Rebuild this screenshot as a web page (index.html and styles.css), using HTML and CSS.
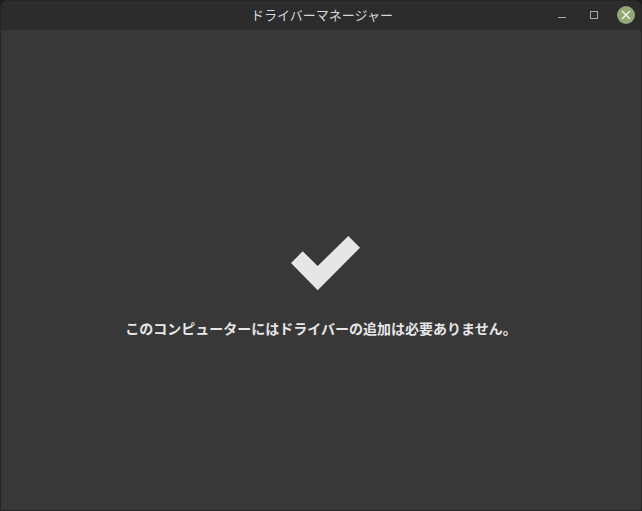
FILE: index.html
```html
<!DOCTYPE html>
<html lang="ja">
  <head>
    <meta charset="UTF-8" />
    <meta name="viewport" content="width=device-width, initial-scale=1.0" />
    <title>ドライバーマネージャー</title>
    <link rel="stylesheet" href="styles.css">
  </head>
  <body>
    <div class="window">
      <!-- Title bar -->
      <header class="titlebar">
        <span class="title">ドライバーマネージャー</span>
        <div class="controls">
          <button class="ctl" aria-label="Minimize">
            <svg width="10" height="10" viewBox="0 0 10 10"><path d="M1 7.5h8" stroke="#a9a9a9" stroke-width="1" fill="none" /></svg>
          </button>
          <button class="ctl" aria-label="Maximize">
            <svg width="10" height="10" viewBox="0 0 10 10"><rect x="1.5" y="1.5" width="7" height="7" stroke="#a9a9a9" stroke-width="1" fill="none" /></svg>
          </button>
          <button class="ctl close" aria-label="Close">
            <svg width="10" height="10" viewBox="0 0 10 10"><path d="M1 1l8 8M9 1l-8 8" stroke="#f0f3ec" stroke-width="1.4" fill="none" /></svg>
          </button>
        </div>
      </header>

      <!-- Status message -->
      <main class="content">
        <svg class="check" width="70" height="55" viewBox="0 0 70 55">
          <path d="M0 27 11.7 15.3 26.7 30 57.3 0 69 11.7 26.7 54.3Z" fill="#e6e6e6" />
        </svg>
        <p class="message">このコンピューターにはドライバーの追加は必要ありません。</p>
      </main>
    </div>
  </body>
</html>
```

FILE: styles.css
```css
html,
body {
  margin: 0;
  padding: 0;
  height: 100%;
  background: #1c1c1c;
}
body {
  font-family: "Noto Sans CJK JP", "Noto Sans", sans-serif;
  overflow: hidden;
}
.window {
  box-sizing: border-box;
  height: 100%;
  display: flex;
  flex-direction: column;
  border: 1px solid #252525;
  border-radius: 7px 7px 0 0;
  background: #383838;
  overflow: hidden;
}
/* Title bar */
.titlebar {
  flex: none;
  box-sizing: border-box;
  height: 29px;
  padding: 0 0 2px 2px;
  display: flex;
  align-items: center;
  justify-content: center;
  position: relative;
  background: #2c2c2c;
}
.title {
  font-size: 13px;
  color: #d8d8d8;
}
.controls {
  position: absolute;
  top: 0;
  right: 0;
  height: 28px;
  display: flex;
  align-items: center;
  gap: 8px;
  padding-right: 6px;
}
.ctl {
  width: 24px;
  height: 24px;
  padding: 0;
  border: none;
  background: none;
  display: flex;
  align-items: center;
  justify-content: center;
}
.close {
  width: 18px;
  height: 18px;
  margin-left: 3px;
  border-radius: 50%;
  background: #8fa876;
}
/* Status message */
.content {
  flex: 1;
  display: flex;
  flex-direction: column;
  align-items: center;
  padding-top: 206px;
}
.check {
  display: block;
  margin-left: 10px;
}
.message {
  margin: 27px 0 0;
  font-size: 14px;
  line-height: 20px;
  font-weight: bold;
  color: #e6e6e6;
}
```
